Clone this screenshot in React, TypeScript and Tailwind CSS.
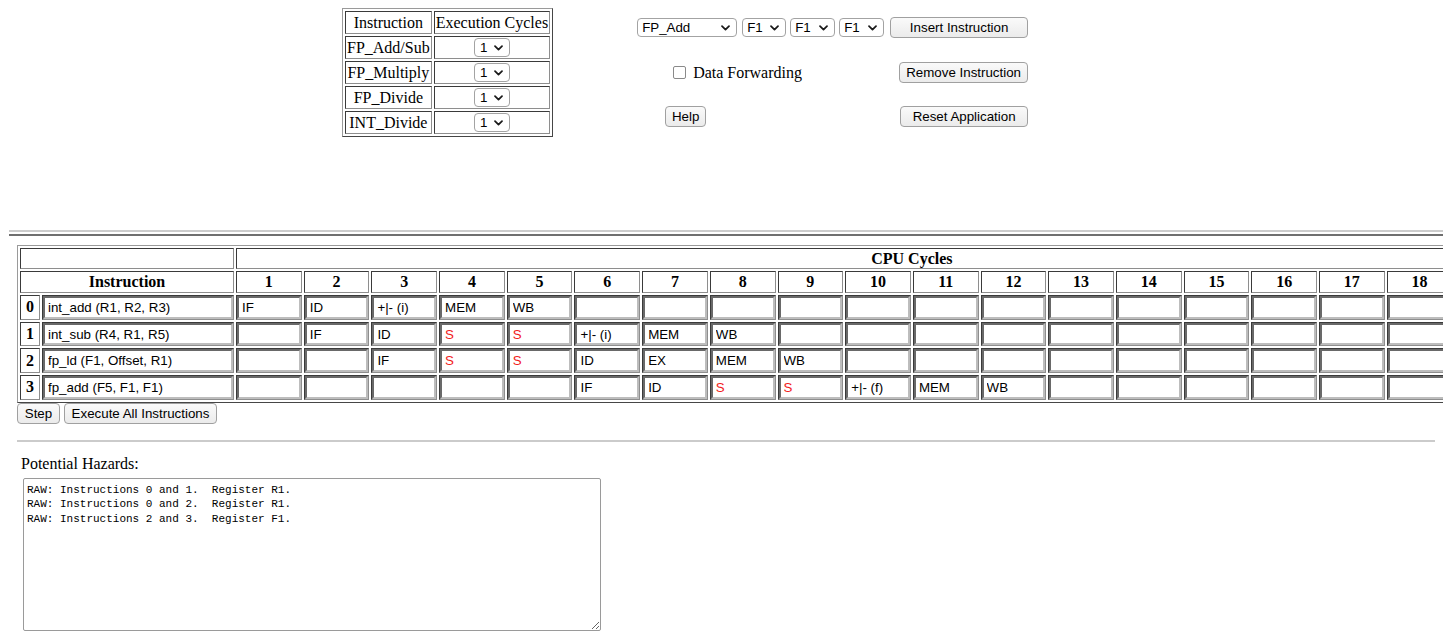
import React from "react";

const cycleCount = 20;

const rows: { name: string; cells: Record<number, string> }[] = [
  { name: "int_add (R1, R2, R3)", cells: { 1: "IF", 2: "ID", 3: "+|- (i)", 4: "MEM", 5: "WB" } },
  { name: "int_sub (R4, R1, R5)", cells: { 2: "IF", 3: "ID", 4: "S", 5: "S", 6: "+|- (i)", 7: "MEM", 8: "WB" } },
  { name: "fp_ld (F1, Offset, R1)", cells: { 3: "IF", 4: "S", 5: "S", 6: "ID", 7: "EX", 8: "MEM", 9: "WB" } },
  { name: "fp_add (F5, F1, F1)", cells: { 6: "IF", 7: "ID", 8: "S", 9: "S", 10: "+|- (f)", 11: "MEM", 12: "WB" } },
];

const hazards =
  "RAW: Instructions 0 and 1.  Register R1.\nRAW: Instructions 0 and 2.  Register R1.\nRAW: Instructions 2 and 3.  Register F1.";

function Chevron() {
  return (
    <svg width="9" height="6" viewBox="0 0 9 6" fill="none">
      <path d="M1 1.2 L4.5 4.7 L8 1.2" stroke="#1a1a1a" strokeWidth="1.7" strokeLinecap="round" strokeLinejoin="round" />
    </svg>
  );
}

// mac-style dropdown, drawn instead of a native select
function Dropdown({ label, className }: { label: string; className: string }) {
  return (
    <div
      className={`flex h-[19px] items-center justify-between rounded-[4px] border border-[#a3a3a3] bg-white pl-[4px] pr-[6px] font-['Liberation_Sans',Arial,sans-serif] text-[13.33px] leading-none text-black ${className}`}
    >
      <span>{label}</span>
      <Chevron />
    </div>
  );
}

function Btn({ children, className = "" }: { children: React.ReactNode; className?: string }) {
  return (
    <button
      className={`flex h-[21px] items-center justify-center rounded-[4px] border border-[#a0a0a0] bg-linear-to-b from-[#fafafa] to-[#ebebeb] px-[6px] font-['Liberation_Sans',Arial,sans-serif] text-[13.33px] leading-none text-black ${className}`}
    >
      {children}
    </button>
  );
}

const cell = "border border-[#8e8e8e] [border-style:inset] p-0";
const field =
  "block h-[22.7px] border-2 border-[#bdbdbd] [border-style:inset] bg-white px-[3px] font-['Liberation_Sans',Arial,sans-serif] text-[13.33px] outline-none";

export default function App() {
  const cycles = Array.from({ length: cycleCount }, (_, i) => i + 1);

  return (
    <div className="h-[637px] w-[1452px] overflow-hidden bg-white font-['Liberation_Serif','Times_New_Roman',serif] text-[16px] text-black">
      {/* top: execution cycle table + instruction controls */}
      <div className="flex h-[230px] items-start">
        <table className="ml-[342px] mt-[8px] border-separate border-spacing-[2px] border border-[#9a9a9a] [border-style:outset]">
          <tbody>
            <tr>
              <td className="border border-[#8e8e8e] [border-style:inset] px-[1px] py-[1px] text-center leading-[19px]">Instruction</td>
              <td className="border border-[#8e8e8e] [border-style:inset] px-[1px] py-[1px] text-center leading-[19px]">Execution Cycles</td>
            </tr>
            {["FP_Add/Sub", "FP_Multiply", "FP_Divide", "INT_Divide"].map((n) => (
              <tr key={n}>
                <td className="border border-[#8e8e8e] [border-style:inset] px-[1px] py-[1px] text-center leading-[19px]">{n}</td>
                <td className="border border-[#8e8e8e] [border-style:inset] px-[1px] py-[1px]">
                  <div className="flex justify-center">
                    <Dropdown label="1" className="w-[36px] pl-[5px]" />
                  </div>
                </td>
              </tr>
            ))}
          </tbody>
        </table>

        <div className="ml-[84px] mt-[17px] flex w-[391px] flex-col">
          <div className="flex items-center">
            <Dropdown label="FP_Add" className="w-[100px]" />
            <Dropdown label="F1" className="ml-[5px] w-[44px]" />
            <Dropdown label="F1" className="ml-[4px] w-[45px]" />
            <Dropdown label="F1" className="ml-[4px] w-[45px]" />
            <Btn className="ml-[6px] w-[138px]">Insert Instruction</Btn>
          </div>
          <div className="mt-[24px] flex items-center justify-between">
            <label className="ml-[36px] flex items-center gap-[7px] leading-[20px]">
              <span className="h-[13px] w-[13px] rounded-[2px] border border-[#8a8a8a] bg-white" />
              Data Forwarding
            </label>
            <Btn className="w-[129px]">Remove Instruction</Btn>
          </div>
          <div className="mt-[23px] flex items-center justify-between">
            <Btn className="ml-[28px] w-[41px]">Help</Btn>
            <Btn className="w-[128px]">Reset Application</Btn>
          </div>
        </div>
      </div>

      {/* pipeline table, clipped on the right */}
      <div className="ml-[9px] w-[1434px] overflow-hidden">
        <div className="h-[2px] bg-[#cccccc]" />
        <div className="mt-[2px] h-[1.5px] bg-[#6f6f6f]" />
        <table className="ml-[8px] mt-[9.5px] border-separate border-spacing-[2px] border border-[#9a9a9a] [border-style:outset]">
          <tbody>
            <tr>
              <td colSpan={2} className={`${cell} leading-[19px]`}>&nbsp;</td>
              <td colSpan={cycleCount} className={`${cell} text-center font-bold leading-[19px]`}>CPU Cycles</td>
            </tr>
            <tr>
              <td colSpan={2} className={`${cell} text-center font-bold leading-[20px]`}>Instruction</td>
              {cycles.map((c) => (
                <td key={c} className={`${cell} text-center font-bold leading-[20px]`}>{c}</td>
              ))}
            </tr>
            {rows.map((r, i) => (
              <tr key={i}>
                <td className={cell}>
                  <div className="w-[18px] text-center font-bold leading-none">{i}</div>
                </td>
                <td className={cell}>
                  <input readOnly value={r.name} className={`${field} w-[190px]`} />
                </td>
                {cycles.map((c) => {
                  const v = r.cells[c] ?? "";
                  return (
                    <td key={c} className={cell}>
                      <input
                        readOnly
                        value={v}
                        className={`${field} w-[63.7px] ${v === "S" ? "text-[#f21b1b]" : "text-black"}`}
                      />
                    </td>
                  );
                })}
              </tr>
            ))}
          </tbody>
        </table>
      </div>

      <div className="ml-[17px] flex gap-[4px]">
        <Btn className="h-[20px] w-[43px]">Step</Btn>
        <Btn className="h-[20px] w-[153px]">Execute All Instructions</Btn>
      </div>

      <div className="ml-[17px] mt-[16px] h-[2px] w-[1418px] bg-[#cbcbcb]" />

      <div className="ml-[21px] mt-[13px] leading-[18px]">Potential Hazards:</div>
      <textarea
        readOnly
        value={hazards}
        className="ml-[23px] mt-[5px] block h-[153px] w-[578px] rounded-[2px] border border-[#9a9a9a] bg-white px-[3px] py-[4px] font-['Liberation_Mono','Courier_New',monospace] text-[11px] leading-[14.6px] text-black outline-none"
      />
    </div>
  );
}
